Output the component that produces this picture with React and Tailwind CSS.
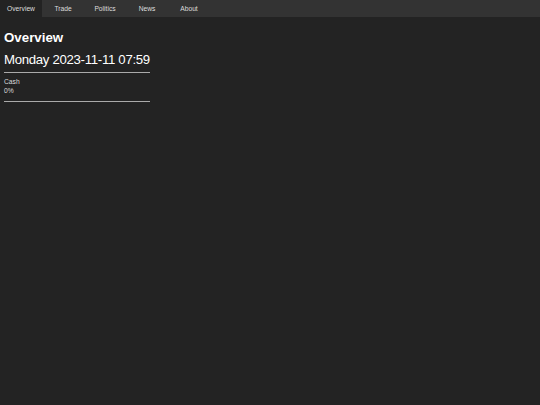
import React from "react";

const tabs = ["Overview", "Trade", "Politics", "News", "About"];

export default function App() {
  return (
    <div className="min-h-[405px] bg-[#232323] font-['Liberation_Sans',Arial,sans-serif] text-white">
      <nav className="flex h-[17px] bg-[#333333]">
        {tabs.map((t, i) => (
          <div
            key={t}
            className={
              i === 0
                ? "w-[42px] text-center text-[6.7px] leading-[17px] text-[#dddddd] bg-[#232323]"
                : "w-[42px] text-center text-[6.7px] leading-[17px] text-[#dddddd]"
            }
          >
            {t}
          </div>
        ))}
      </nav>

      <div className="px-[4px]">
        <h2 className="mt-[12.5px] text-[13.3px] font-bold leading-[15.3px]">Overview</h2>

        <div className="mt-[7px] w-[146px] border-b border-[#aaaaaa] pb-[4.5px]">
          <div className="text-[13.2px] leading-[15.5px] tracking-[-0.3px] whitespace-nowrap">Monday 2023-11-11 07:59</div>
        </div>

        <div className="mt-[5.5px] w-[146px] border-b border-[#aaaaaa] pb-[5.5px] text-[6.7px] leading-[8.5px] text-[#dddddd]">
          <div>Cash</div>
          <div>0%</div>
        </div>
      </div>
    </div>
  );
}
